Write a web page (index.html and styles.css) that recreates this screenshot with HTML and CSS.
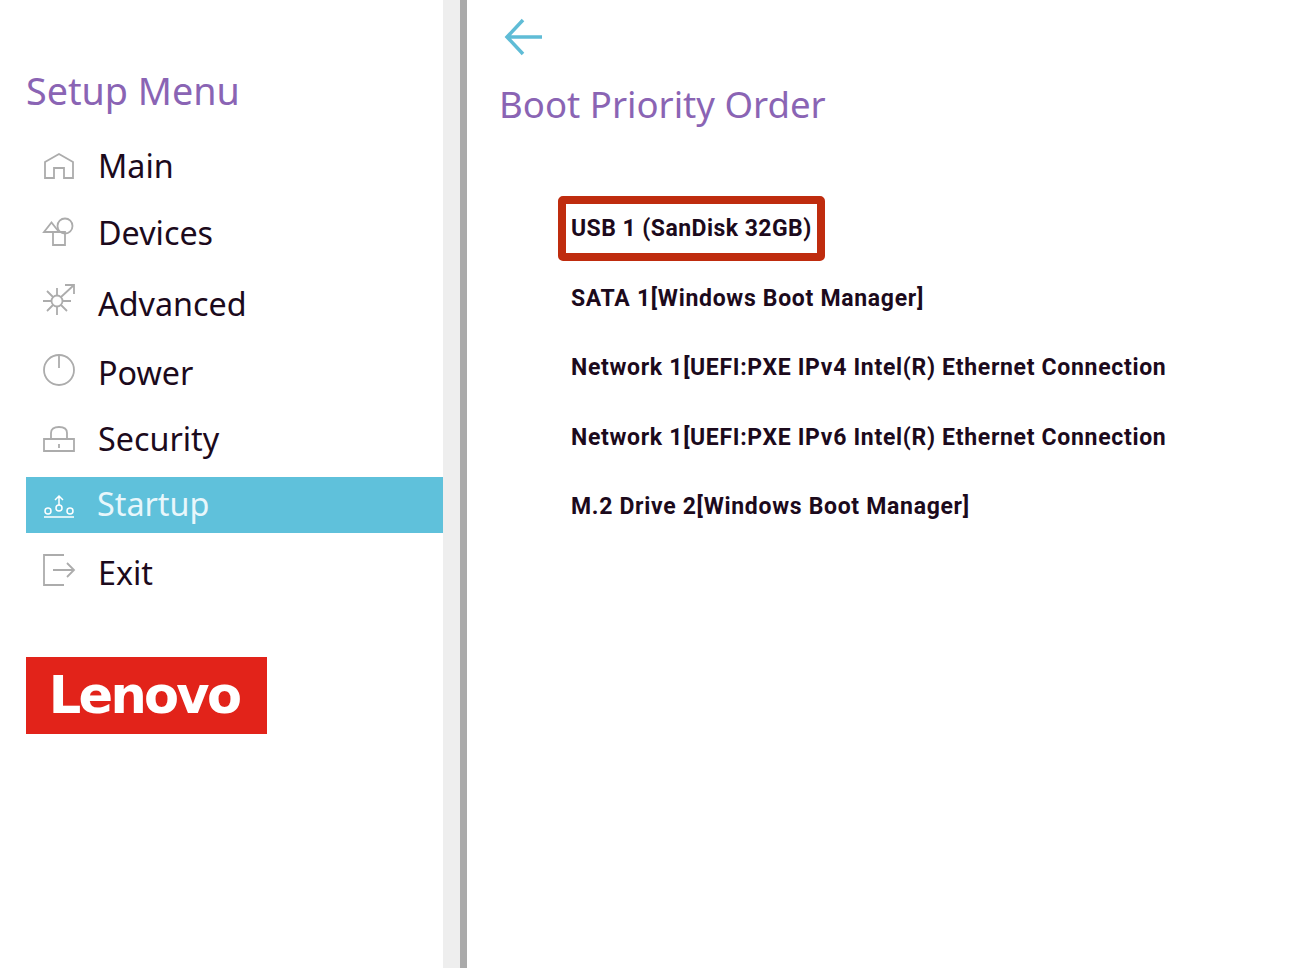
FILE: index.html
```html
<!DOCTYPE html>
<html lang="en">
<head>
  <meta charset="UTF-8" />
  <title>Boot Priority Order</title>
  <link rel="stylesheet" href="styles.css">
</head>
<body>
  <div class="sidebar">
    <h1 class="menu-title">Setup Menu</h1>
    <ul class="menu">
      <li class="item item-main">
        <svg class="icon" width="34" height="28" viewBox="0 0 34 28"><path d="M3 26V10L17 2l14 8v16H22V16H12v10z"/></svg>
        <span>Main</span>
      </li>
      <li class="item item-devices">
        <svg class="icon" width="34" height="30" viewBox="0 0 34 30"><path d="M2 15L9.500 5.500 17 15z"/><circle cx="23" cy="9" r="7.500"/><path d="M11 15h12v13H11z"/></svg>
        <span>Devices</span>
      </li>
      <li class="item item-advanced">
        <svg class="icon" width="34" height="34" viewBox="0 0 34 34"><circle cx="15" cy="18" r="5.500"/><path d="M15 5v8M15 23v9M1 18h8M21 18h8M5 8l6 6M19 22l6 6M5 28l6-6M19 14L32 2M23 2h9v9"/></svg>
        <span>Advanced</span>
      </li>
      <li class="item item-power">
        <svg class="icon" width="34" height="34" viewBox="0 0 34 34"><circle cx="17" cy="17" r="15"/><path d="M17 2v13"/></svg>
        <span>Power</span>
      </li>
      <li class="item item-security">
        <svg class="icon" width="34" height="28" viewBox="0 0 34 28"><path d="M2 14h30v12H2zM9 14V8q0-6 8-6t8 6v6M17 19v4"/></svg>
        <span>Security</span>
      </li>
      <li class="item item-startup active">
        <svg class="icon" width="34" height="26" viewBox="0 0 34 26"><circle cx="6" cy="17" r="3"/><circle cx="17" cy="14" r="3"/><circle cx="28" cy="17" r="3"/><path d="M17 11V2M13 6l4-4 4 4M2 23h30"/></svg>
        <span>Startup</span>
      </li>
      <li class="item item-exit">
        <svg class="icon" width="34" height="34" viewBox="0 0 34 34"><path d="M22 2H2v30h20M11 17h21M25 10l7 7-7 7"/></svg>
        <span>Exit</span>
      </li>
    </ul>
    <div class="logo">Lenovo</div>
  </div>
  <div class="divider"></div>
  <div class="content">
    <svg class="back" width="40" height="38" viewBox="0 0 40 38"><path d="M38 19H3M19 2L3 19l16 17"/></svg>
    <h2 class="page-title">Boot Priority Order</h2>
    <ul class="boot-list">
      <li class="boot-item selected">USB 1 (SanDisk 32GB)</li>
      <li class="boot-item">SATA 1[Windows Boot Manager]</li>
      <li class="boot-item">Network 1[UEFI:PXE IPv4 Intel(R) Ethernet Connection</li>
      <li class="boot-item">Network 1[UEFI:PXE IPv6 Intel(R) Ethernet Connection</li>
      <li class="boot-item">M.2 Drive 2[Windows Boot Manager]</li>
    </ul>
  </div>
</body>
</html>
```
FILE: styles.css
```css
html, body {
  height: 100%;
}

body {
  margin: 0;
  display: flex;
  height: 968px;
  overflow: hidden;
  background: #fff;
  color: #1c0a1c;
  font-family: "Noto Sans", sans-serif;
}

.sidebar {
  width: 417px;
  padding: 67px 0 0 26px;
  flex-shrink: 0;
}

.menu-title {
  margin: 0;
  height: 71px;
  color: #8a64b4;
  font-size: 37.700px;
  font-weight: 400;
  line-height: 48px;
}

.menu {
  list-style: none;
  margin: 0;
  padding: 0;
}

.item {
  display: flex;
  align-items: center;
  height: 56px;
  padding-left: 16px;
  font-size: 32.300px;
}

.item span {
  margin-left: 22px;
  margin-bottom: 2px;
}

.icon {
  width: 34px;
  flex-shrink: 0;
  fill: none;
  stroke: #acacac;
  stroke-width: 1.8;
}

.item-devices { margin-top: 11px; }
.item-advanced { margin-top: 15px; }
.item-power { margin-top: 13px; }
.item-security { margin-top: 10px; }
.item-startup { margin-top: 10px; }
.item-exit { margin-top: 12px; }

.item-devices .icon { margin-bottom: 3px; }
.item-advanced .icon { margin-bottom: 8px; }
.item-power .icon { margin-bottom: 6px; }
.item-exit .icon { margin-bottom: 6px; }
.item-startup .icon { margin-top: 4px; stroke-width: 1.5; }

.active {
  background: #5fc1db;
  color: #e8f7fb;
}

.active .icon {
  stroke: #fff;
}

.active span {
  margin-left: 21px;
  margin-bottom: 4px;
}

.logo {
  width: 236px;
  height: 77px;
  margin-top: 56px;
  padding-right: 5px;
  background: #e2231a;
  color: #fff;
  font-family: "DejaVu Sans", sans-serif;
  font-size: 51px;
  font-weight: 700;
  letter-spacing: -2.700px;
  line-height: 77px;
  text-align: center;
}

.divider {
  width: 17px;
  background: #eeeeee;
  border-right: 7px solid #aaaaaa;
  flex-shrink: 0;
}

.content {
  padding: 18px 0 0 32px;
}

.back {
  display: block;
  margin-left: 5px;
  fill: none;
  stroke: #5fbcd6;
  stroke-width: 3.500;
}

.page-title {
  margin: 23px 0 0;
  height: 51px;
  color: #8a64b4;
  font-size: 36.600px;
  font-weight: 400;
  line-height: 50px;
}

.boot-list {
  list-style: none;
  margin: 66px 0 0 59px;
  padding: 0;
}

.boot-item {
  width: fit-content;
  height: 65px;
  margin-bottom: 4.500px;
  padding: 0 13px;
  box-sizing: border-box;
  color: #1c0a1c;
  font-family: "Roboto", sans-serif;
  font-size: 23px;
  font-weight: 700;
  letter-spacing: 0.690px;
  line-height: 65px;
  white-space: nowrap;
}

.selected {
  padding: 0 5px;
  border: 8px solid #bf2c0e;
  border-radius: 5px;
  letter-spacing: 0.450px;
  line-height: 49px;
}
```
